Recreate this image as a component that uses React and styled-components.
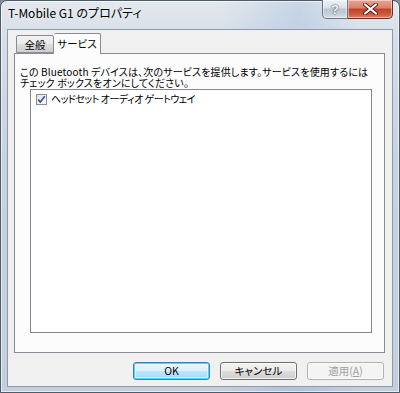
import React from "react";
import styled, { createGlobalStyle } from "styled-components";

const Global = createGlobalStyle`
  html, body { margin: 0; padding: 0; background: #7f8d9c; }
  body { width: 400px; height: 393px; overflow: hidden; }
  * { box-sizing: border-box; }
`;

const UI = `"Noto Sans CJK JP", "Liberation Sans", sans-serif`;

const Frame = styled.div`
  width: 400px;
  height: 393px;
  border: 1px solid #4e5b6a;
  border-radius: 7px 7px 0 0;
  background:
    linear-gradient(90deg, rgba(255,255,255,0) 55%, rgba(120,160,210,0.25) 75%, rgba(255,255,255,0) 90%),
    linear-gradient(180deg, #e3e8ee 0%, #d6dee7 10%, #c9d3de 40%, #c4cfdb 100%);
  box-shadow: inset 0 0 0 1px rgba(255,255,255,0.6);
  display: flex;
  flex-direction: column;
  padding: 0 6px 5px 6px;
  font-family: ${UI};
`;

const TitleBar = styled.div`
  height: 28px;
  display: flex;
  align-items: flex-start;
  justify-content: space-between;
`;

const Title = styled.div`
  font-size: 12px;
  color: #000;
  padding: 4px 0 0 1px;
  line-height: 16px;
  text-shadow: 0 0 6px rgba(255,255,255,0.9);
  font-feature-settings: "palt" 1;
`;

const Caption = styled.div`
  display: flex;
  margin-top: -1px;
`;

const CapButton = styled.div`
  height: 19px;
  width: ${p => p.$w}px;
  border: 1px solid ${p => (p.$close ? "#6d2b22" : "#6a7580")};
  border-top: none;
  border-radius: ${p => (p.$close ? "0 0 5px 0" : "0 0 0 5px")};
  border-left: ${p => (p.$close ? "none" : undefined)};
  background: ${p =>
    p.$close
      ? "linear-gradient(180deg, #e8a493 0%, #d8806a 45%, #c1412a 50%, #cc5a3e 80%, #e0875f 100%)"
      : "linear-gradient(180deg, #eef2f6 0%, #d9e0e8 45%, #bcc6d1 50%, #c6d0db 80%, #d9e2ea 100%)"};
  box-shadow: inset 0 0 0 1px rgba(255,255,255,0.45);
  display: flex;
  align-items: center;
  justify-content: center;
`;

const HelpGlyph = styled.span`
  font-family: "Liberation Sans", sans-serif;
  font-weight: bold;
  font-size: 13px;
  color: #f4f6f8;
  text-shadow: 0 0 1px #4d5864, 0 0 2px #4d5864;
  line-height: 1;
`;

const Client = styled.div`
  flex: 1;
  background: #f0f0f0;
  border: 1px solid #8d9aab;
  display: flex;
  flex-direction: column;
  padding: 1px 8px 0 6px;
`;

const TabStrip = styled.div`
  display: flex;
  align-items: flex-end;
  height: 22px;
  padding-left: 2px;
  position: relative;
  z-index: 1;
`;

const Tab = styled.div`
  font-size: 10.5px;
  line-height: 14px;
  white-space: nowrap;
  text-align: center;
  font-feature-settings: "palt" 1;
  color: #000;
  border: 1px solid #898c95;
  border-bottom: ${p => (p.$active ? "none" : "1px solid #898c95")};
  border-left: ${p => (p.$active ? "none" : "1px solid #898c95")};
  border-radius: 2px 2px 0 0;
  height: ${p => (p.$active ? "21px" : "18px")};
  margin-bottom: ${p => (p.$active ? "-1px" : "0")};
  padding: ${p => (p.$active ? "3px 0 0 0" : "2px 0 0 0")};
  width: ${p => p.$w}px;
  background: ${p =>
    p.$active
      ? "#fcfcfc"
      : "linear-gradient(180deg, #f2f2f2 0%, #ebebeb 50%, #dddddd 50%, #cfcfcf 100%)"};
`;

const Panel = styled.div`
  width: 371px;
  height: 300px;
  border: 1px solid #898c95;
  background: #fcfcfc;
  padding: 12px 12px 0 5px;
  display: flex;
  flex-direction: column;
`;

const Desc = styled.p`
  margin: 0;
  font-size: 10px;
  line-height: 11px;
  letter-spacing: 0.15px;
  font-feature-settings: "palt" 1;
  color: #000;
  white-space: nowrap;
`;

const ListBox = styled.div`
  margin: 1px 0 0 10px;
  height: 244px;
  border: 1px solid #828790;
  background: #fff;
  padding: 3px 5px;
`;

const Item = styled.label`
  display: flex;
  align-items: center;
  gap: 4px;
  font-size: 10px;
  line-height: 12px;
  letter-spacing: -0.5px;
  font-feature-settings: "palt" 1;
  color: #000;
`;

const Box = styled.span`
  width: 11px;
  height: 11px;
  border: 1px solid #8e8f8f;
  background: linear-gradient(135deg, #e4e4e4, #fbfbfb);
  display: flex;
  align-items: center;
  justify-content: center;
  flex: none;
`;

const Buttons = styled.div`
  display: flex;
  justify-content: flex-end;
  gap: 10px;
  padding: 9px 0 0 0;
`;

const Button = styled.div`
  width: 77px;
  height: 18px;
  border-radius: 3px;
  border: 1px solid ${p => (p.$disabled ? "#adb2b5" : p.$default ? "#3c7fb1" : "#707070")};
  background: ${p =>
    p.$disabled
      ? "#f4f4f4"
      : p.$default
      ? "linear-gradient(180deg, #eaf6fd 0%, #d9f0fc 50%, #bee6fd 50%, #a7d9f5 100%)"
      : "linear-gradient(180deg, #f2f2f2 0%, #ebebeb 50%, #dddddd 50%, #cfcfcf 100%)"};
  box-shadow: ${p =>
    p.$default ? "inset 0 0 0 1px #48d8fb, inset 0 0 0 2px rgba(255,255,255,0.5)" : "inset 0 0 0 1px rgba(255,255,255,0.7)"};
  color: ${p => (p.$disabled ? "#a0a0a0" : "#000")};
  font-size: 10.5px;
  font-feature-settings: "palt" 1;
  display: flex;
  align-items: center;
  justify-content: center;
  line-height: 1;
`;

const U = styled.span`
  text-decoration: underline;
`;

export default function App() {
  return (
    <>
      <Global />
      <Frame>
        <TitleBar>
          <Title>T-Mobile G1 のプロパティ</Title>
          <Caption>
            <CapButton $w={26}>
              <HelpGlyph>?</HelpGlyph>
            </CapButton>
            <CapButton $w={45} $close>
              <svg width="15" height="12" viewBox="0 0 15 12">
                <path
                  d="M2 1.5 L13 10.5 M13 1.5 L2 10.5"
                  stroke="#5b1a10"
                  strokeWidth="4"
                  strokeLinecap="round"
                />
                <path
                  d="M2 1.5 L13 10.5 M13 1.5 L2 10.5"
                  stroke="#fff"
                  strokeWidth="2.2"
                  strokeLinecap="round"
                />
              </svg>
            </CapButton>
          </Caption>
        </TitleBar>
        <Client>
          <TabStrip>
            <Tab $w={38}>全般</Tab>
            <Tab $w={47} $active>サービス</Tab>
          </TabStrip>
          <Panel>
            <Desc>
              この Bluetooth デバイスは、次のサービスを提供します。サービスを使用するには
              <br />
              チェック ボックスをオンにしてください。
            </Desc>
            <ListBox>
              <Item>
                <Box>
                  <svg width="9" height="9" viewBox="0 0 9 9">
                    <path d="M1.2 4.6 L3.4 7 L7.8 1.3" fill="none" stroke="#3d50a6" strokeWidth="1.7" />
                  </svg>
                </Box>
                ヘッドセット オーディオ ゲートウェイ
              </Item>
            </ListBox>
          </Panel>
          <Buttons>
            <Button $default>OK</Button>
            <Button>キャンセル</Button>
            <Button $disabled>
              適用(<U>A</U>)
            </Button>
          </Buttons>
        </Client>
      </Frame>
    </>
  );
}
